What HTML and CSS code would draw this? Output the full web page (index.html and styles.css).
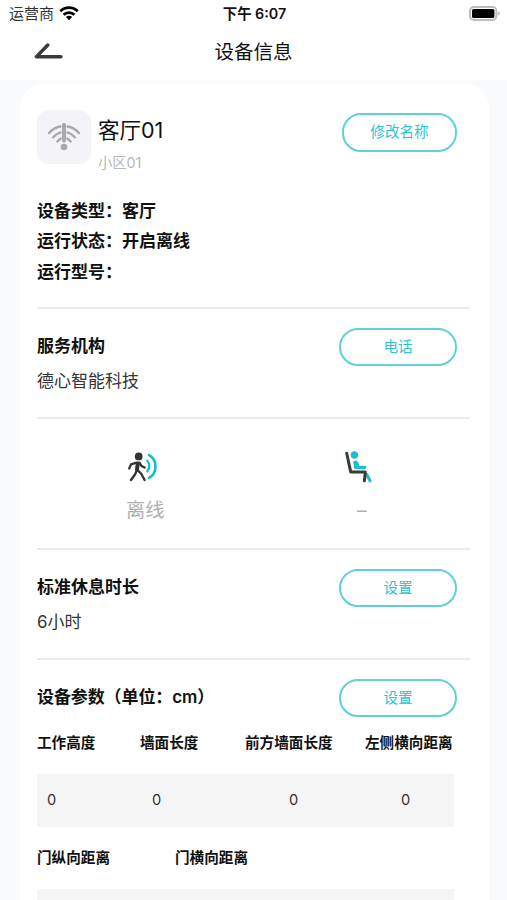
FILE: index.html
```
<!DOCTYPE html>
<html lang="zh-CN">
<head>
    <meta charset="UTF-8">
    <meta name="viewport" content="width=device-width, initial-scale=1.0">
    <title>设备信息</title>
    <link rel="stylesheet" href="styles.css">
</head>
<body>

    <header>
        <div class="status-bar">
            <div class="carrier">
                <span>运营商</span>
                <svg width="20" height="15" viewBox="0 0 20 15" fill="none" stroke="#000" stroke-width="2.8">
                    <path d="M1.3 5.3a12.3 12.3 0 0 1 17.4 0"/>
                    <path d="M4.6 8.8a7.6 7.6 0 0 1 10.8 0"/>
                    <path d="M10 14.2L6.9 11a4.4 4.4 0 0 1 6.2 0z" fill="#000" stroke="none"/>
                </svg>
            </div>
            <span class="time">下午 6:07</span>
            <svg class="battery" width="31" height="15" viewBox="0 0 31 15">
                <rect x="1" y="1" width="26.4" height="13" rx="4" fill="#fff" stroke="#bdbdbd" stroke-width="2"/>
                <rect x="3" y="3" width="22.4" height="9" rx="1.5" fill="#000"/>
                <path d="M28.8 5.2q2 .8 2 2.3t-2 2.3z" fill="#bdbdbd"/>
            </svg>
        </div>
        <div class="nav-bar">
            <svg class="back" width="30" height="18" viewBox="0 0 30 18" fill="none" stroke="#3a3a3a" stroke-width="3.4" stroke-linecap="round" stroke-linejoin="round">
                <path d="M13.8 2L2.4 13.7H27"/>
            </svg>
            <h1>设备信息</h1>
        </div>
    </header>

    <main class="card">
        <section class="device">
            <div class="device-top">
                <div class="device-icon">
                    <svg width="34" height="28" viewBox="0 0 34 28" fill="none" stroke="#a9a9ac" stroke-width="2.5" stroke-linecap="round">
                        <path d="M2 10Q7 4.6 13.3 3.6M32 10Q27 4.6 20.7 3.6"/>
                        <path d="M6.2 14.2Q9 10.8 13.2 9.6M27.8 14.2Q25 10.8 20.8 9.6"/>
                        <path d="M10.5 18.3L13.4 15.6M23.5 18.3L20.6 15.6"/>
                        <path d="M17 2V17.5" stroke-width="4.2"/>
                        <circle cx="17" cy="24" r="3.3" fill="#a9a9ac" stroke="none"/>
                    </svg>
                </div>
                <div class="device-name">
                    <h2>客厅01</h2>
                    <p>小区01</p>
                </div>
                <button type="button" class="btn btn-rename">修改名称</button>
            </div>
            <ul class="device-info">
                <li>设备类型：客厅</li>
                <li>运行状态：开启离线</li>
                <li>运行型号：</li>
            </ul>
        </section>

        <section class="row">
            <div>
                <h3>服务机构</h3>
                <p>德心智能科技</p>
            </div>
            <button type="button" class="btn">电话</button>
        </section>

        <section class="state">
            <div class="state-item">
                <svg width="30" height="30" viewBox="0 0 30 30" fill="none" stroke="#333" stroke-linecap="round" stroke-linejoin="round">
                    <circle cx="11.7" cy="4.4" r="3.9" fill="#333" stroke="none"/>
                    <path d="M10.8 11.5L10 17.6" stroke-width="4"/>
                    <path d="M9.5 10.6L4 12.4L2.2 16.5M12.5 10.6L14.5 14L17.6 15.6M9.7 18.5L8 22.5L4 28M11 18.5L14.4 22L17.6 28" stroke-width="2.3"/>
                    <path d="M20.2 8.6Q24.4 13.8 20.2 19.4" stroke="#15bccb" stroke-width="2.2"/>
                    <path d="M22 3.2C30.6 7.5 30.6 21.5 22 25.8" stroke="#15bccb" stroke-width="2.6"/>
                </svg>
                <span>离线</span>
            </div>
            <div class="state-item">
                <svg class="seat" width="30" height="34" viewBox="0 0 30 34" fill="none" stroke-linecap="round" stroke-linejoin="round">
                    <circle cx="11.4" cy="5" r="3.7" fill="#19bfce"/>
                    <path d="M10.2 11.4Q13.5 9 15.3 12.4L16.3 15.8H22Q23.4 16 23.4 17.4T22 18.9H12.5Q11.2 18.9 11 17.5z" fill="#19bfce"/>
                    <path d="M23.8 24.5L27 30.8" stroke="#19bfce" stroke-width="3"/>
                    <path d="M3.7 3.2L7.7 21.9H22.3L21.4 30.8" stroke="#3a3a3a" stroke-width="3"/>
                </svg>
                <span>–</span>
            </div>
        </section>

        <section class="row">
            <div>
                <h3>标准休息时长</h3>
                <p>6小时</p>
            </div>
            <button type="button" class="btn">设置</button>
        </section>

        <section class="params">
            <div class="params-head">
                <h3>设备参数（单位：cm）</h3>
                <button type="button" class="btn">设置</button>
            </div>
            <div class="labels">
                <span>工作高度</span>
                <span>墙面长度</span>
                <span>前方墙面长度</span>
                <span>左侧横向距离</span>
            </div>
            <div class="values">
                <span>0</span>
                <span>0</span>
                <span>0</span>
                <span>0</span>
            </div>
            <div class="labels labels-door">
                <span>门纵向距离</span>
                <span>门横向距离</span>
            </div>
            <div class="values"></div>
        </section>
    </main>

</body>
</html>
```
FILE: styles.css
```
* {
    box-sizing: border-box;
    margin: 0;
    padding: 0;
}
body {
    height: 900px;
    overflow: hidden;
    background-color: #f8fafb;
    color: #111;
    font-family: Inter, "Noto Sans CJK SC", sans-serif;
}
header {
    height: 80px;
    background-color: #fff;
}
.status-bar {
    display: grid;
    grid-template-columns: 1fr auto 1fr;
    align-items: center;
    height: 27px;
    padding: 0 7px 0 9px;
    font-size: 15px;
    line-height: 27px;
}
.carrier {
    display: flex;
    align-items: center;
    gap: 5px;
    color: #333;
}
.time {
    font-size: 14.3px;
    font-weight: 600;
}
.battery {
    justify-self: end;
}
.nav-bar {
    display: grid;
    grid-template-columns: 1fr auto 1fr;
    align-items: center;
    height: 49px;
    padding: 0 34px;
}
h1 {
    font-size: 19.5px;
    font-weight: 400;
    line-height: 30px;
}
.card {
    width: 469px;
    height: 840px;
    margin: 4px 0 0 20px;
    padding: 0 19px 0 17px;
    border-radius: 24px;
    background-color: #fff;
}
section {
    border-bottom: 2px solid #ebebeb;
}
.btn {
    width: 118px;
    height: 38px;
    margin-right: 13px;
    border: 2px solid #5fd0db;
    border-radius: 19px;
    background-color: #fff;
    color: #2cc3d0;
    font-family: inherit;
    font-size: 14.6px;
    line-height: 33px;
}
.btn-rename {
    width: 115px;
    height: 39px;
    margin-left: auto;
}
.device {
    height: 225px;
    padding-top: 26px;
}
.device-top {
    display: flex;
    align-items: flex-start;
}
.device-top .btn {
    margin-top: 3px;
}
.device-icon {
    display: flex;
    align-items: center;
    justify-content: center;
    width: 54px;
    height: 54px;
    border-radius: 12px;
    background-color: #f3f3f8;
}
.device-name {
    margin-left: 7px;
}
h2 {
    margin-top: 4px;
    font-size: 21.5px;
    font-weight: 400;
    line-height: 32px;
}
.device-name p {
    margin-top: 6px;
    color: #b8b8b8;
    font-size: 14.3px;
    line-height: 22px;
}
.device-info {
    margin-top: 22px;
    list-style: none;
    font-size: 17px;
    font-weight: 600;
    line-height: 30.4px;
}
.row {
    display: flex;
    justify-content: space-between;
    height: 110px;
    padding-top: 20px;
}
.row .btn {
    margin-top: -1px;
}
h3 {
    font-size: 17px;
    font-weight: 600;
    line-height: 35px;
}
.row p {
    color: #333;
    font-size: 17px;
    line-height: 35px;
}
.state {
    display: grid;
    grid-template-columns: 1fr 1fr;
    height: 131px;
    padding-top: 31px;
}
.state-item {
    display: flex;
    flex-direction: column;
    align-items: center;
    color: #b0b0b0;
    font-size: 19.3px;
    line-height: 30px;
}
.state-item svg {
    height: 34px;
    margin: 0 6px 11px 0;
}
.state-item .seat {
    margin-right: 8px;
}
.params {
    padding-top: 19px;
    border-bottom: none;
}
.params-head {
    display: flex;
    justify-content: space-between;
}
.params-head h3 {
    padding-top: 1px;
    letter-spacing: -0.1px;
}
.labels {
    display: grid;
    grid-template-columns: 103px 105px 120px 1fr;
    width: 417px;
    margin-top: 11px;
    font-size: 14.6px;
    font-weight: 600;
    line-height: 30px;
    white-space: nowrap;
}
.labels-door {
    grid-template-columns: 138px 1fr;
    margin-top: 16px;
}
.values {
    display: grid;
    grid-template-columns: 105px 137px 112px 1fr;
    width: 417px;
    height: 53px;
    margin-top: 16px;
    padding-left: 10px;
    background-color: #f5f5f5;
    color: #333;
    font-size: 14.6px;
    line-height: 52px;
}
```
